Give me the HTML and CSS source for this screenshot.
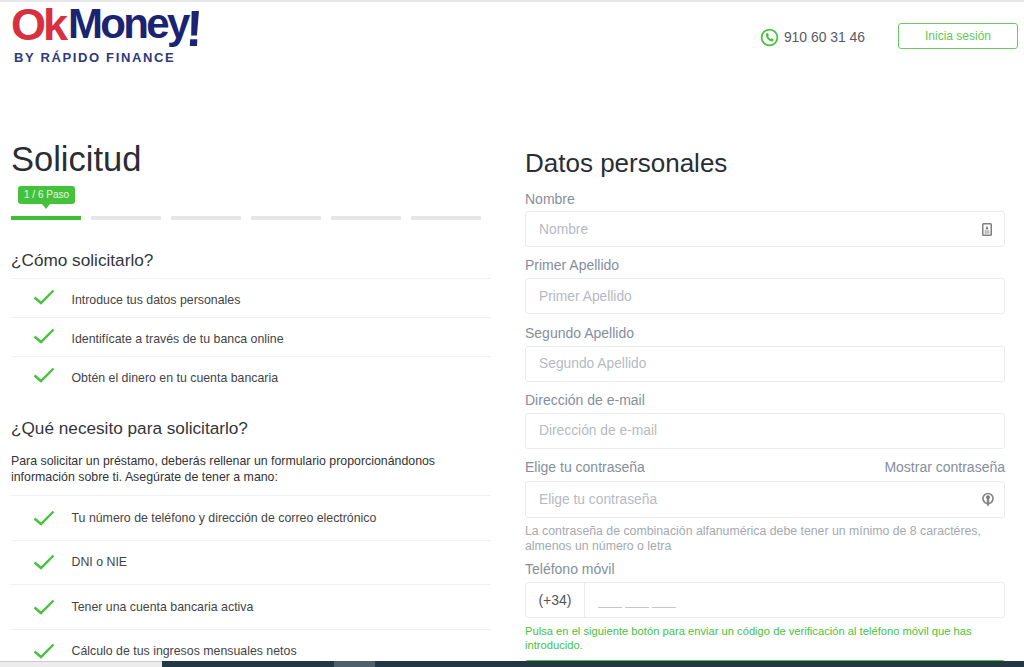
FILE: index.html
```html
<!DOCTYPE html>
<html lang="es">
<head>
<meta charset="utf-8">
<title>OkMoney - Solicitud</title>
<link rel="stylesheet" href="styles.css">
</head>
<body>
<header class="header">
  <div class="logo">
    <div class="logo-main"><span class="logo-ok">Ok</span><span class="logo-money">Money</span><span class="logo-bang">!</span></div>
    <div class="logo-sub">BY RÁPIDO FINANCE</div>
  </div>
  <div class="header-right">
    <div class="phone">
      <svg class="phone-icon" viewBox="0 0 20 20"><circle cx="10" cy="10" r="8.3" fill="none" stroke="#46c23f" stroke-width="1.9"/><path d="M7 5.6 L8.5 5.2 L9.4 7.6 L8.5 8.5 C8.9 9.8 9.9 11 11.2 11.7 L12.2 10.8 L14.4 12 L14 13.5 C13.6 14.2 12.8 14.4 12 14.2 C9 13.4 6.8 11 6.2 8 C6 7 6.3 6.1 7 5.6 Z" fill="#46c23f"/></svg>
      <span>910 60 31 46</span>
    </div>
    <a class="login">Inicia sesión</a>
  </div>
</header>
<main class="main">
  <section class="left">
    <h1 class="title">Solicitud</h1>
    <div class="steps">
      <div class="step step-active"><span class="step-tip">1 / 6 Paso</span></div>
      <div class="step"></div>
      <div class="step"></div>
      <div class="step"></div>
      <div class="step"></div>
      <div class="step"></div>
    </div>
    <h2 class="subtitle">¿Cómo solicitarlo?</h2>
    <ul class="list">
      <li class="item"><svg class="check" viewBox="0 0 22 16"><path d="M1.5 8.5 L8 14 L20.5 1.5" fill="none" stroke="#46c23f" stroke-width="2.4"/></svg>Introduce tus datos personales</li>
      <li class="item"><svg class="check" viewBox="0 0 22 16"><path d="M1.5 8.5 L8 14 L20.5 1.5" fill="none" stroke="#46c23f" stroke-width="2.4"/></svg>Identifícate a través de tu banca online</li>
      <li class="item"><svg class="check" viewBox="0 0 22 16"><path d="M1.5 8.5 L8 14 L20.5 1.5" fill="none" stroke="#46c23f" stroke-width="2.4"/></svg>Obtén el dinero en tu cuenta bancaria</li>
    </ul>
    <h2 class="subtitle subtitle-second">¿Qué necesito para solicitarlo?</h2>
    <p class="intro">Para solicitar un préstamo, deberás rellenar un formulario proporcionándonos información sobre ti. Asegúrate de tener a mano:</p>
    <ul class="list list-tall">
      <li class="item"><svg class="check" viewBox="0 0 22 16"><path d="M1.5 8.5 L8 14 L20.5 1.5" fill="none" stroke="#46c23f" stroke-width="2.4"/></svg>Tu número de teléfono y dirección de correo electrónico</li>
      <li class="item"><svg class="check" viewBox="0 0 22 16"><path d="M1.5 8.5 L8 14 L20.5 1.5" fill="none" stroke="#46c23f" stroke-width="2.4"/></svg>DNI o NIE</li>
      <li class="item"><svg class="check" viewBox="0 0 22 16"><path d="M1.5 8.5 L8 14 L20.5 1.5" fill="none" stroke="#46c23f" stroke-width="2.4"/></svg>Tener una cuenta bancaria activa</li>
      <li class="item"><svg class="check" viewBox="0 0 22 16"><path d="M1.5 8.5 L8 14 L20.5 1.5" fill="none" stroke="#46c23f" stroke-width="2.4"/></svg>Cálculo de tus ingresos mensuales netos</li>
    </ul>
  </section>
  <section class="right">
    <h2 class="form-title">Datos personales</h2>
    <div class="field field-first">
      <label class="label">Nombre</label>
      <div class="input"><span>Nombre</span>
        <svg class="input-icon icon-id" viewBox="0 0 10 13"><rect x="0.75" y="0.75" width="8.5" height="11.5" rx="0.8" fill="none" stroke="#808080" stroke-width="1.5"/><path d="M5 2.6 L6.4 6.2 H3.6 Z" fill="#777"/><rect x="2.6" y="7.4" width="4.8" height="1.2" fill="#a0a0a0"/><rect x="2.6" y="9.3" width="4.8" height="1.2" fill="#a0a0a0"/></svg>
      </div>
    </div>
    <div class="field">
      <label class="label">Primer Apellido</label>
      <div class="input"><span>Primer Apellido</span></div>
    </div>
    <div class="field">
      <label class="label">Segundo Apellido</label>
      <div class="input"><span>Segundo Apellido</span></div>
    </div>
    <div class="field">
      <label class="label">Dirección de e-mail</label>
      <div class="input"><span>Dirección de e-mail</span></div>
    </div>
    <div class="field">
      <div class="label-row"><label class="label">Elige tu contraseña</label><span class="label">Mostrar contraseña</span></div>
      <div class="input input-pass"><span>Elige tu contraseña</span>
        <svg class="input-icon" viewBox="0 0 12 15"><circle cx="6" cy="6.5" r="5" fill="none" stroke="#888" stroke-width="1.7"/><circle cx="6" cy="5.2" r="1.9" fill="#777"/><path d="M4.8 6.5 H7.2 V12.8 L6 14.6 L4.8 12.8 Z" fill="#888"/></svg>
      </div>
      <p class="hint">La contraseña de combinación alfanumérica debe tener un mínimo de 8 caractéres, almenos un número o letra</p>
    </div>
    <div class="field field-tight">
      <label class="label">Teléfono móvil</label>
      <div class="input input-phone">
        <span class="prefix">(+34)</span>
        <span class="mask"><i></i><i></i><i></i></span>
      </div>
      <p class="hint hint-green">Pulsa en el siguiente botón para enviar un código de verificación al teléfono móvil que has introducido.</p>
    </div>
    <div class="submit"></div>
  </section>
</main>
<div class="taskbar">
  <div class="bar-light"></div>
  <div class="bar-dark"></div>
  <div class="bar-mid"></div>
  <div class="bar-dark bar-grow"></div>
</div>
</body>
</html>
```
FILE: styles.css
```css
* { box-sizing: border-box; }
html, body { height: 667px; overflow: hidden; }
body {
  margin: 0;
  background: #fff;
  font-family: "Liberation Sans", Arial, sans-serif;
  color: #333;
  border-top: 2px solid #e8e8e8;
}
.header {
  display: flex;
  justify-content: space-between;
  align-items: flex-start;
  padding: 0 6px 0 11px;
  height: 130px;
}
.logo { width: 200px; }
.logo-main {
  display: flex;
  align-items: baseline;
  height: 49px;
  font-weight: 700;
  line-height: 42px;
  white-space: nowrap;
}
.logo-ok {
  color: #d8303f;
  font-size: 45px;
  letter-spacing: -3px;
  transform: translateY(1.5px);
}
.logo-money {
  margin-left: 3px;
  color: #1b2473;
  font-size: 42px;
  letter-spacing: -2.7px;
}
.logo-bang {
  margin-left: -2px;
  color: #1b2473;
  font-size: 51px;
  line-height: 10px;
  transform: translateY(8px) skewX(-3deg);
}
.logo-sub {
  margin: 0 0 0 3px;
  font-size: 13px;
  line-height: 14px;
  font-weight: 700;
  letter-spacing: 1.65px;
  color: #2d3a80;
  white-space: nowrap;
}
.header-right {
  display: flex;
  align-items: center;
  gap: 33px;
  padding-top: 21px;
}
.phone {
  display: flex;
  align-items: center;
  gap: 5px;
  padding-top: 2px;
  font-size: 13.9px;
  color: #555a66;
}
.phone-icon { width: 19px; height: 19px; }
.login {
  display: flex;
  align-items: center;
  justify-content: center;
  width: 120px;
  height: 26px;
  border: 1px solid #66cc60;
  border-radius: 3px;
  font-size: 12px;
  color: #5cc957;
}
.main {
  display: flex;
  padding: 0 19px 0 11px;
  gap: 34px;
}
.left, .right { width: 480px; flex: none; }
.title {
  margin: 7px 0 0;
  font-size: 34.5px;
  line-height: 40px;
  font-weight: 400;
  color: #2a2d33;
}
.steps {
  display: flex;
  gap: 10px;
  width: 470px;
  margin-top: 37px;
}
.step {
  position: relative;
  flex: 1;
  height: 4px;
  background: #e6e6e6;
}
.step-active { background: #3fbe37; }
.step-tip {
  position: absolute;
  left: 7px;
  bottom: 16px;
  width: 57px;
  height: 18px;
  border-radius: 3px;
  background: #44c23c;
  color: #e9f8e7;
  font-size: 10px;
  line-height: 18px;
  text-align: center;
  white-space: nowrap;
}
.step-tip::after {
  content: "";
  position: absolute;
  left: 24px;
  bottom: -5px;
  border-left: 4px solid transparent;
  border-right: 4px solid transparent;
  border-top: 5px solid #44c23c;
}
.subtitle {
  margin: 29px 0 0;
  font-size: 17.2px;
  line-height: 22px;
  font-weight: 400;
  color: #33363c;
}
.subtitle-second { margin-top: 22px; }
.list {
  list-style: none;
  margin: 7px 0 0;
  padding: 0;
}
.item {
  display: flex;
  align-items: center;
  height: 39px;
  padding-left: 22px;
  padding-top: 4px;
  gap: 16.5px;
  border-top: 1px solid #eef0f2;
  font-size: 12.35px;
  color: #444;
}
.check { width: 22px; height: 16px; flex: none; margin-top: -7px; }
.intro {
  margin: 14px 0 0;
  font-size: 12.35px;
  line-height: 16px;
  color: #333;
}
.list-tall { margin-top: 10px; }
.list-tall .item { height: 44.5px; padding-top: 0; }
.list-tall .check { margin-top: 0; }
.form-title {
  margin: 16px 0 0;
  font-size: 26px;
  line-height: 30px;
  font-weight: 400;
  color: #2a2d33;
}
.field { margin-top: 10.3px; }
.field-first { margin-top: 13px; }
.field-tight { margin-top: 7px; }
.label {
  display: block;
  font-size: 14px;
  line-height: 17px;
  color: #868e9c;
}
.label-row { display: flex; justify-content: space-between; }
.input {
  display: flex;
  align-items: center;
  justify-content: space-between;
  height: 36px;
  margin-top: 4px;
  padding: 0 10px 0 13px;
  border: 1px solid #e9ecef;
  border-radius: 3px;
  font-size: 13.8px;
  color: #b6bac1;
}
.field-first .input { margin-top: 3px; }
.input-pass { margin-top: 5px; height: 37px; }
.input-icon { width: 12px; height: 15px; }
.icon-id { width: 10px; height: 13px; margin-right: 2px; }
.input-phone { justify-content: flex-start; padding: 0; }
.prefix {
  display: flex;
  align-items: center;
  justify-content: center;
  width: 59px;
  height: 100%;
  font-size: 14px;
  border-right: 1px solid #e9ecef;
  color: #555;
}
.mask { display: flex; gap: 3px; margin: 15px 0 0 13px; }
.mask i { display: block; width: 24px; height: 1px; background: #c4c7cc; }
.hint {
  margin: 6px 0 0;
  font-size: 12.3px;
  line-height: 15px;
  color: #a5a9b0;
}
.hint-green {
  margin-top: 6px;
  font-size: 11.2px;
  line-height: 14px;
  color: #46c23f;
}
.submit {
  height: 40px;
  margin-top: 8px;
  background: #46c23f;
  border-radius: 3px;
}
.taskbar {
  position: fixed;
  left: 0;
  right: 0;
  bottom: 0;
  height: 6px;
  display: flex;
}
.bar-light { width: 162px; background: #ececec; border-top: 1px solid #ccc; }
.bar-dark { width: 172px; background: #233844; }
.bar-mid { width: 41px; background: #4d606b; }
.bar-grow { flex: 1; }
```
